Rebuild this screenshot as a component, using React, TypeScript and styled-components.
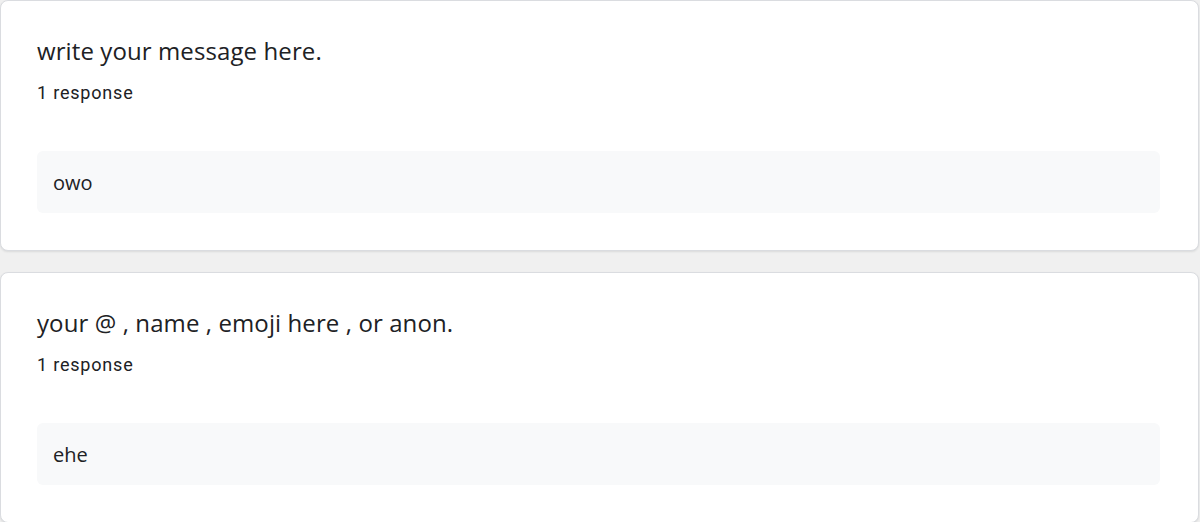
import React from "react";
import styled, { createGlobalStyle } from "styled-components";

const GlobalStyle = createGlobalStyle`
  html, body {
    margin: 0;
    padding: 0;
    background: #f0f0f0;
  }
  body {
    font-family: Roboto, "Noto Sans", Arial, sans-serif;
    color: #202124;
    -webkit-font-smoothing: antialiased;
  }
`;

const Page = styled.div`
  display: flex;
  flex-direction: column;
  gap: 21px;
  width: 1200px;
  overflow: hidden;
`;

const Card = styled.section`
  background: #ffffff;
  border: 1px solid #dadce0;
  border-radius: 8px;
  box-shadow: 0 1px 2px rgba(60, 64, 67, 0.12);
  padding: 35px 38px 37px 36px;
  width: 1199px;
  box-sizing: border-box;
`;

const Title = styled.div`
  font-family: "Open Sans", Roboto, sans-serif;
  font-size: 24px;
  line-height: 30px;
  color: #202124;
  letter-spacing: 0.1px;
`;

const Count = styled.div`
  margin-top: 16px;
  font-family: Roboto, Arial, sans-serif;
  font-size: 18px;
  line-height: 22px;
  color: #202124;
  letter-spacing: 0.8px;
`;

const Answer = styled.div`
  margin-top: 47px;
  height: 62px;
  background: #f8f9fa;
  border-radius: 6px;
  display: flex;
  align-items: center;
  padding: 0 16px;
  font-family: "Open Sans", Roboto, sans-serif;
  font-size: 20px;
  color: #202124;
`;

const questions = [
  { title: "write your message here.", count: "1 response", answer: "owo" },
  { title: "your @ , name , emoji here , or anon.", count: "1 response", answer: "ehe" },
];

export default function App() {
  return (
    <>
      <GlobalStyle />
      <Page>
        {questions.map((q) => (
          <Card key={q.title}>
            <Title>{q.title}</Title>
            <Count>{q.count}</Count>
            <Answer>{q.answer}</Answer>
          </Card>
        ))}
      </Page>
    </>
  );
}
